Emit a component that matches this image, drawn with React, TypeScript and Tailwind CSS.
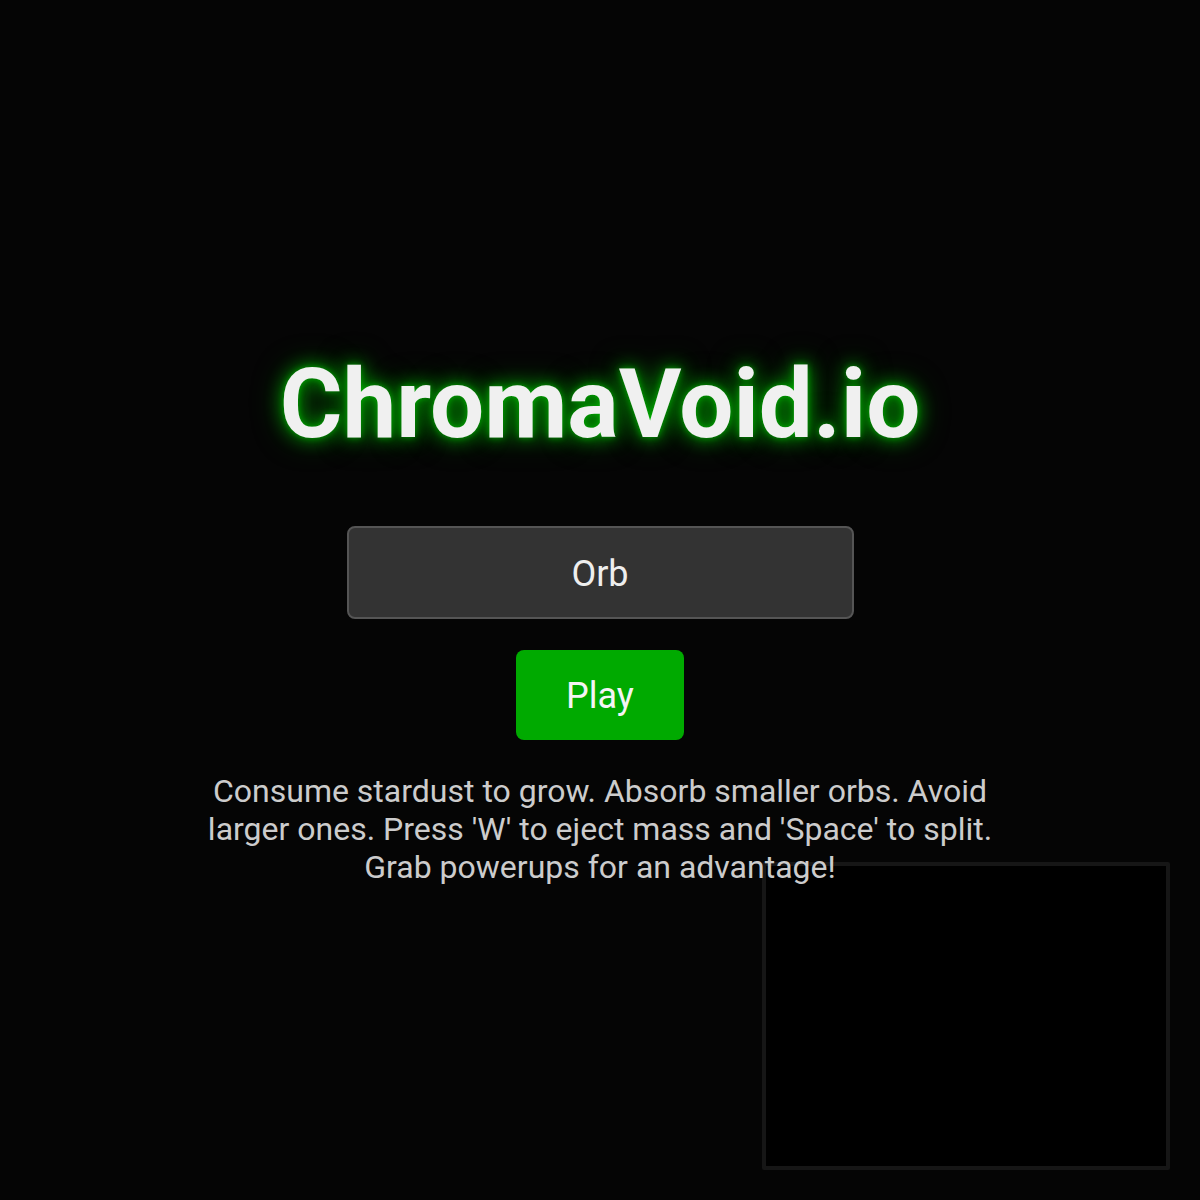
import React from "react";

export default function App() {
  return (
    <div
      className="relative w-[1200px] h-[1200px] bg-[#050505] overflow-hidden"
      style={{ fontFamily: "Roboto, 'Liberation Sans', sans-serif" }}
    >
      <div className="absolute right-[30px] bottom-[30px] w-[408px] h-[308px] border-4 border-[#161616] bg-black rounded-[2px]" />
      <div className="relative flex flex-col items-center pt-[344px]">
        <h1 className="text-[96px] leading-[120px] font-bold text-[#f0f0f0] [text-shadow:0_0_6px_rgba(0,255,0,0.45),0_0_18px_#009a00,0_0_30px_rgba(0,150,0,0.6)]">
          ChromaVoid.io
        </h1>
        <div className="mt-[62px] w-[507px] h-[93px] pt-[3px] rounded-[8px] border-2 border-[#555555] bg-[#333333] flex items-center justify-center text-[36px] text-[#eeeeee]">
          Orb
        </div>
        <button className="mt-[31px] w-[168px] h-[90px] pt-[2px] rounded-[8px] bg-[#00aa00] text-[36px] text-[#f4f4f4]">
          Play
        </button>
        <p className="mt-[32px] w-[800px] text-center text-[32px] leading-[38px] text-[#cccccc]">
          Consume stardust to grow. Absorb smaller orbs. Avoid larger ones. Press 'W' to eject mass and 'Space' to split. Grab powerups for an advantage!
        </p>
      </div>
    </div>
  );
}
